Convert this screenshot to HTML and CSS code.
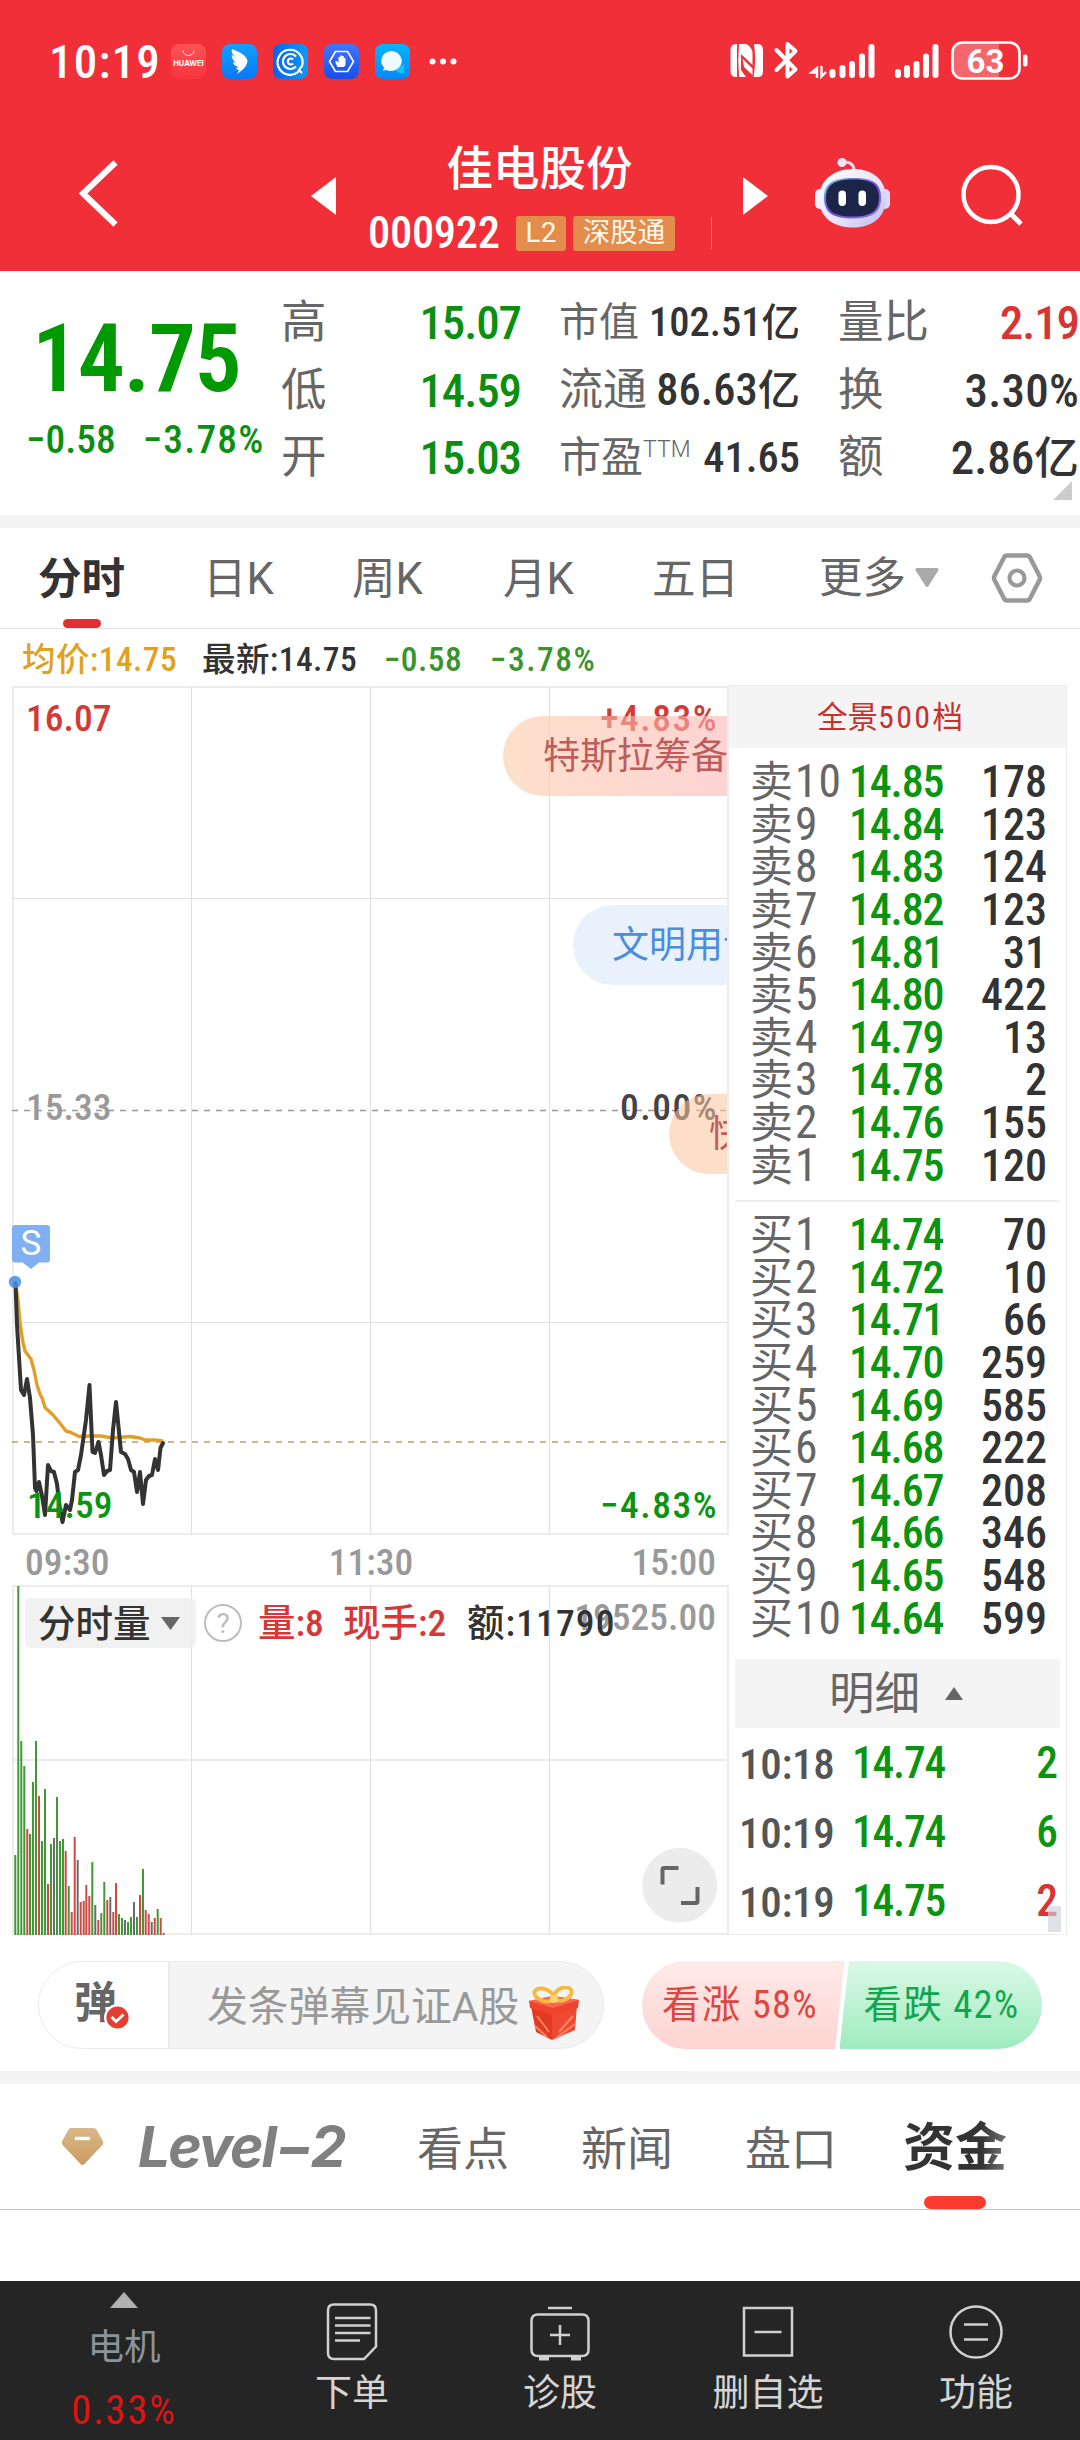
FILE: index.html
```
<!DOCTYPE html>
<html lang="zh-CN">
<head>
<meta charset="utf-8">
<title>佳电股份 000922</title>
<link rel="stylesheet" href="styles.css">
</head>
<body>
<header class="top">
  <div class="status">
    <span class="clock">10:19</span>
    <svg class="apps" width="290" height="36" viewBox="171 44 290 36">
      <defs>
        <linearGradient id="hw" x2="0" y2="1"><stop stop-color="#ff5257"/><stop offset="1" stop-color="#f8343c"/></linearGradient>
        <linearGradient id="bl" x2="0" y2="1"><stop stop-color="#13a0ff"/><stop offset="1" stop-color="#0878f8"/></linearGradient>
        <linearGradient id="qc"><stop stop-color="#0a62ee"/><stop offset="1" stop-color="#0c9af8"/></linearGradient>
        <linearGradient id="hd" x2="0" y2="1"><stop stop-color="#4277f8"/><stop offset="1" stop-color="#1450ea"/></linearGradient>
        <linearGradient id="ch" x2="0" y2="1"><stop stop-color="#06b4ff"/><stop offset="1" stop-color="#0787f8"/></linearGradient>
      </defs>
      <rect x="171" y="44" width="35" height="35" rx="8" fill="url(#hw)"/>
      <path d="M183 50.500a5.500 5 0 0 0 11 0" fill="none" stroke="#fff" stroke-width="1"/>
      <text x="188.500" y="66" class="hw">HUAWEI</text>
      <rect x="222" y="44" width="35" height="35" rx="8" fill="url(#bl)"/>
      <path d="M232 49C240 52 247 56 247.500 61C247 65 245 68 241 71L237 74L239 70L236 69L238 67C235 66 233 64 233 62L236 63C233 60 231 57 232 55L235 57C232 54 231 51 232 49Z" fill="#fff"/>
      <rect x="273" y="44" width="35" height="35" rx="8" fill="url(#qc)"/>
      <g fill="none" stroke="#fff" stroke-width="2.200"><path d="M299 71A12.500 12.500 0 1 1 302 66L299 70L302 73"/><path d="M296 56.500A7.500 7.500 0 1 0 296 66.500"/><path d="M293 59.500A3 3 0 1 0 293 63.500"/></g>
      <rect x="324" y="44" width="35" height="35" rx="8" fill="url(#hd)"/>
      <path d="M335.500 51.500H347.500L353.500 61.500L347.500 71.500H335.500L329.500 61.500Z" fill="none" stroke="#fff" stroke-width="1.600" stroke-linejoin="round"/>
      <path d="M337.500 67L335 61.500L337 61L338.500 63V57H340.200V61V55.500H342V61V56H343.800V61.500V58H345.500V65L344 67Z" fill="#fff"/>
      <rect x="375" y="44" width="35" height="35" rx="8" fill="url(#ch)"/>
      <path d="M404 64C405 68 402 71 405 73C400 74 396 72 396 70Z" fill="#0cc8ff"/>
      <path d="M391 51A11 10 0 1 1 386 70L383 71L384 67.500A11 10 0 0 1 391 51Z" fill="#eefaff"/>
      <g fill="#fff"><circle cx="432.500" cy="61.500" r="3"/><circle cx="443" cy="61.500" r="3"/><circle cx="453.500" cy="61.500" r="3"/></g>
    </svg>
    <svg class="signals" width="300" height="40" viewBox="730 41 300 40">
      <path d="M736 44H737V77H736Q730.500 77 730.500 71V50Q730.500 44 736 44ZM739 44H746Q751 46 752.500 52V65L741 54V70L746 77H739Q737.500 60 739 44ZM754 44H758Q763 44 763 50V71Q763 77 758 77H753.500Q756.500 60 754 44ZM742.500 58.500L752.500 68.500V75L744 67Z" fill="#fff"/>
      <path d="M776.500 50L795.500 69.500L787.500 76.500V44L795.500 51L776.500 70" fill="none" stroke="#fff" stroke-width="4" stroke-linejoin="round" stroke-linecap="round"/>
      <path d="M817 78V68L811.500 72.500H817M821.500 66V76.500L826 72" fill="none" stroke="#fff" stroke-width="2.400"/>
      <g stroke="#fff" stroke-width="6" stroke-linecap="round"><path d="M832.500 72V75M842.500 68V75M852 64V75M862 56.500V75M871.500 47V75M898 72V75M907 68V75M916.500 64V75M926 56.500V75M935.500 47V75"/></g>
      <path d="M962 43.500H999V78H962A9.500 9.500 0 0 1 953 69V52.500A9.500 9.500 0 0 1 962 43.500Z" fill="#f6676d"/>
      <rect x="952.500" y="42.500" width="67" height="36" rx="10" fill="none" stroke="#fff" stroke-width="2.600"/>
      <rect x="1023" y="54.500" width="4.500" height="12" rx="2" fill="#fff"/>
      <text x="985.500" y="72.700" class="batt">63</text>
    </svg>
  </div>
  <div class="titlebar">
    <svg class="back" width="40" height="68" viewBox="79 160 40 68"><path d="M115.500 162.500L83 193.500L115.500 224.500" fill="none" stroke="#fff" stroke-width="6"/></svg>
    <svg class="prev" width="25" height="38" viewBox="0 0 25 38"><path d="M25 0V38L0 19Z" fill="#fff"/></svg>
    <div class="stock">
      <div class="name">佳电股份</div>
      <div class="codeline"><span class="code">000922</span><span class="tag l2">L2</span><span class="tag sgt">深股通</span><i class="vline"></i></div>
    </div>
    <svg class="next" width="25" height="38" viewBox="0 0 25 38"><path d="M0 0V38L25 19Z" fill="#fff"/></svg>
    <svg class="robot" width="76" height="72" viewBox="815 157 76 72">
      <defs><linearGradient id="rb" x2="1" y2="1"><stop stop-color="#fff"/><stop offset=".6" stop-color="#e6e2fa"/><stop offset="1" stop-color="#b9b8ee"/></linearGradient>
      <linearGradient id="sc" x2="1" y2="1"><stop stop-color="#5fc4e0"/><stop offset=".5" stop-color="#7049d8"/><stop offset="1" stop-color="#8d7ae8"/></linearGradient></defs>
      <path d="M842 163C849 161 854 164 854 170" fill="none" stroke="#e8dcf6" stroke-width="3"/><circle cx="842" cy="162.500" r="4.500" fill="#efe6fa"/>
      <rect x="815" y="189" width="10" height="20" rx="5" fill="#f3f1fd"/><rect x="880" y="189" width="10" height="20" rx="5" fill="#dcdaf8"/>
      <path d="M853 169C875 169 886 182 886 198C886 217 872 227.500 853 227.500C833 227.500 819 217 819 198C819 182 832 169 853 169Z" fill="url(#rb)"/>
      <path d="M853 178C874 178 881 184 881 198C881 212 873 218.500 853 218.500C832 218.500 824 212 824 198C824 184 832 178 853 178Z" fill="url(#sc)"/>
      <path d="M853 179.500C872 179.500 879 185 879 198C879 211 871 216.500 853 216.500C834 216.500 826 211 826 198C826 185 834 179.500 853 179.500Z" fill="#1c2448"/>
      <rect x="838.500" y="190.500" width="7.500" height="15.500" rx="3.700" fill="#fff"/><rect x="858.500" y="190.500" width="7.500" height="15.500" rx="3.700" fill="#fff"/>
    </svg>
    <svg class="search" width="66" height="66" viewBox="960 163 66 66"><circle cx="991" cy="194.500" r="27.500" fill="none" stroke="#fff" stroke-width="4.500"/><path d="M1010.500 213.500L1021 224" stroke="#fff" stroke-width="5"/></svg>
  </div>
</header>

<section class="quote">
  <div class="price">
    <div class="last">14.75</div>
    <div class="chg"><span>−0.58</span><span class="pc">−3.78%</span></div>
  </div>
  <dl class="c1">
    <div><dt>高</dt><dd class="g">15.07</dd></div>
    <div><dt>低</dt><dd class="g">14.59</dd></div>
    <div><dt>开</dt><dd class="g">15.03</dd></div>
  </dl>
  <dl class="c2">
    <div class="s40"><dt>市值</dt><dd>102.51<b>亿</b></dd></div>
    <div class="s44"><dt>流通</dt><dd>86.63<b>亿</b></dd></div>
    <div class="s42"><dt>市盈<sup>TTM</sup></dt><dd>41.65</dd></div>
  </dl>
  <dl class="c3">
    <div><dt>量比</dt><dd class="r">2.19</dd></div>
    <div><dt>换</dt><dd class="pct">3.30%</dd></div>
    <div><dt>额</dt><dd>2.86<b>亿</b></dd></div>
  </dl>
  <i class="corner"></i>
</section>

<nav class="periods">
  <span class="on">分时</span><span>日K</span><span>周K</span><span>月K</span><span>五日</span>
  <span class="more">更多<svg width="24" height="20" viewBox="0 0 24 20"><path d="M2 0H22Q24.500 .5 23 3L13.500 18Q12 20 10.500 18L1 3Q-.5 .5 2 0Z" fill="#aaa"/></svg></span>
  <svg class="gear" width="52" height="50" viewBox="0 0 52 50"><path d="M16 2.500H36Q38 2.500 39 4.500L48.500 23Q49.500 25 48.500 27L39 45.500Q38 47.500 36 47.500H16Q14 47.500 13 45.500L3.500 27Q2.500 25 3.500 23L13 4.500Q14 2.500 16 2.500Z" fill="none" stroke="#999" stroke-width="4.500"/><circle cx="26" cy="25" r="7.500" fill="none" stroke="#999" stroke-width="4.200"/></svg>
</nav>

<div class="legend"><span class="avg">均价:14.75</span><span class="new">最新:14.75</span><span class="lg">−0.58</span><span class="lg pc">−3.78%</span></div>

<main class="board">
  <svg class="chart" width="729" height="1250" viewBox="0 685 729 1250">
    <defs>
      <linearGradient id="p1" gradientUnits="userSpaceOnUse" x1="503" x2="729" y1="0" y2="0"><stop stop-color="#fbc9a4"/><stop offset="1" stop-color="#fcb3b3"/></linearGradient>
    </defs>
    <g stroke="#ececec" stroke-width="2" fill="none">
      <path d="M13 687H728V1534H13ZM13 1586H728V1934H13ZM13 1760H728"/>
    </g>
    <path d="M12 898.500H728M12 1322.500H728M191.500 687V1534M370.500 687V1534M549.500 687V1534M191.500 1587V1934M370.500 1587V1934M549.500 1587V1934" stroke="#e0e0e0" fill="none"/>
    <path d="M12 1110.500H728" stroke="#999" stroke-width="1.500" stroke-dasharray="6 6"/>
    <path d="M12 1442H728" stroke="#b5a06a" stroke-width="1.500" stroke-dasharray="6 6"/>
    <polyline fill="none" stroke="#dfa02a" stroke-width="3.400" stroke-linejoin="round" points="15.500,1283 18,1300 20,1322 22.500,1340 25,1351 31,1359 34,1370 37,1385 40,1394 42.500,1399 45,1407.500 53,1415 59,1422 66,1431 71,1432.500 79,1436.500 90,1436 101,1436 112,1438 130,1436.500 140,1438 145,1440 155,1440 163,1441"/>
    <polyline fill="none" stroke="#333" stroke-width="4" stroke-linejoin="round" stroke-linecap="round" points="15.500,1283 17,1325 21,1390 24,1395 27,1379 30,1398 33,1435 35,1488 36.500,1491 39,1482 42,1496 45,1515 48,1465 51,1471 54,1472 57,1484 60,1510 62.500,1522 66,1505 70,1510 72,1500 75,1472 78,1470 81,1455 86,1420 89.500,1385 92.500,1452 95,1453 98.500,1442 101,1455 104,1475 107,1471 110,1470 113,1430 116,1402 121,1452 125,1454 128,1459 131,1470 134,1472 137,1492 140,1472 143,1504 146,1480 149,1476 152,1475 155,1459 158,1470 160.500,1448 163,1443"/>
    <circle cx="15" cy="1282" r="6.200" fill="#4a8fe3" opacity=".85"/>
    <path d="M15 1225H47Q50 1225 50 1228V1259.500Q50 1262.500 47 1262.500H39L31 1269L22.500 1262.500H15Q12 1262.500 12 1259.500V1228Q12 1225 15 1225Z" fill="#80b0f2"/>
    <text x="31" y="1255" class="mark">S</text>
    <g class="ax">
      <text x="26" y="730.500" class="tr">16.07</text><text x="718" y="730.500" class="tr end pc">+4.83%</text>
      <text x="26" y="1119.500" class="tg">15.33</text><text x="718" y="1119.500" class="td end pc">0.00%</text>
      <text x="27" y="1518" class="gr">14.59</text><text x="718" y="1518" class="gr end pc">−4.83%</text>
      <text x="25" y="1575" class="tg">09:30</text><text x="371" y="1575" class="tg mid">11:30</text><text x="716" y="1575" class="tg end">15:00</text>
      <text x="716" y="1630" class="tg end">19525.00</text>
    </g>
    <g opacity=".58"><path d="M729 716H543A40 40 0 0 0 543 796H729Z" fill="url(#p1)"/></g>
    <text x="543" y="769" class="dm dr">特斯拉筹备</text>
    <path d="M729 905H613A40 40 0 0 0 613 985H729Z" fill="#e9f1fd"/>
    <text x="612" y="958" class="dm db">文明用语</text>
    <path d="M729 1094H709A40 40 0 0 0 709 1174H729Z" fill="#fbc39a" opacity=".55"/>
    <text x="709" y="1147" class="dm dr">快涨</text>
    <path d="M728 687V1534" stroke="#ececec" stroke-width="2"/>
    <g fill="none" stroke-width="2">
      <path stroke="#3f9a35" d="M15.300 1935V1855M18.300 1935V1586M21.300 1935V1741M24.300 1935V1766M30 1935V1834M33 1935V1782M36 1935V1741M42 1935V1841M45 1935V1789M51 1935V1844M57 1935V1797M60 1935V1841M63 1935V1839M68.700 1935V1886M92.300 1935V1862M101.300 1935V1913M104.300 1935V1882M119 1935V1914M122 1935V1918M128 1935V1922M131 1935V1917M137 1935V1917M143 1935V1869M157.700 1935V1909"/>
      <path stroke="#cf4a45" d="M27.300 1935V1829M39 1935V1796M48 1935V1884M65.700 1935V1851M71.700 1935V1912M74.700 1935V1837M80.700 1935V1902M83.700 1935V1901M86.300 1935V1885M89.300 1935V1896M98.300 1935V1920M107.300 1935V1900M113.300 1935V1912M116 1935V1883M140 1935V1895M145.700 1935V1910M148.700 1935V1914M154.700 1935V1918M160.700 1935V1918M163.700 1935V1933"/>
      <path stroke="#6b6b6b" d="M54 1935V1838M77.700 1935V1860M95.300 1935V1905M110.300 1935V1897M125 1935V1920M134 1935V1902M151.700 1935V1922"/>
    </g>
    <rect x="25" y="1598" width="171" height="50" rx="6" fill="#eee" fill-opacity=".85"/>
    <text x="38" y="1637" class="vt td2">分时量</text>
    <path d="M161 1617H180L170.500 1630Z" fill="#666"/>
    <circle cx="223" cy="1623" r="18" fill="none" stroke="#bdbdbd" stroke-width="2"/><text x="223" y="1633" class="qm">?</text>
    <text x="258" y="1636" class="vt tr">量:8</text><text x="343" y="1636" class="vt tr">现手:2</text><text x="467" y="1636" class="vt td2 wide">额:11790</text>
    <circle cx="679.700" cy="1885.300" r="37.500" fill="#ececec"/>
    <path d="M678.500 1868H664Q662.500 1868 662.500 1870V1884.500M681 1903H696Q697.500 1903 697.500 1901V1887" fill="none" stroke="#666" stroke-width="4"/>
  </svg>
  <aside class="book">
    <div class="full">全景<span>500</span>档</div>
    <ul class="asks">
      <li><i>卖<u>10</u></i><b>14.85</b><em>178</em></li>
      <li><i>卖<u>9</u></i><b>14.84</b><em>123</em></li>
      <li><i>卖<u>8</u></i><b>14.83</b><em>124</em></li>
      <li><i>卖<u>7</u></i><b>14.82</b><em>123</em></li>
      <li><i>卖<u>6</u></i><b>14.81</b><em>31</em></li>
      <li><i>卖<u>5</u></i><b>14.80</b><em>422</em></li>
      <li><i>卖<u>4</u></i><b>14.79</b><em>13</em></li>
      <li><i>卖<u>3</u></i><b>14.78</b><em>2</em></li>
      <li><i>卖<u>2</u></i><b>14.76</b><em>155</em></li>
      <li><i>卖<u>1</u></i><b>14.75</b><em>120</em></li>
    </ul>
    <ul class="bids">
      <li><i>买<u>1</u></i><b>14.74</b><em>70</em></li>
      <li><i>买<u>2</u></i><b>14.72</b><em>10</em></li>
      <li><i>买<u>3</u></i><b>14.71</b><em>66</em></li>
      <li><i>买<u>4</u></i><b>14.70</b><em>259</em></li>
      <li><i>买<u>5</u></i><b>14.69</b><em>585</em></li>
      <li><i>买<u>6</u></i><b>14.68</b><em>222</em></li>
      <li><i>买<u>7</u></i><b>14.67</b><em>208</em></li>
      <li><i>买<u>8</u></i><b>14.66</b><em>346</em></li>
      <li><i>买<u>9</u></i><b>14.65</b><em>548</em></li>
      <li><i>买<u>10</u></i><b>14.64</b><em>599</em></li>
    </ul>
    <div class="detail">明细<svg width="18" height="13" viewBox="0 0 18 13"><path d="M9 0L18 13H0Z" fill="#666"/></svg></div>
    <ul class="ticks">
      <li><i>10:18</i><b>14.74</b><em>2</em></li>
      <li><i>10:19</i><b>14.74</b><em>6</em></li>
      <li><i>10:19</i><b>14.75</b><em class="r">2</em></li>
    </ul>
    <span class="thumb"></span>
  </aside>
</main>

<section class="barrage">
  <div class="input">
    <div class="toggle"><span>弹</span><svg width="27" height="27" viewBox="0 0 27 27"><circle cx="13.500" cy="13.500" r="12.300" fill="#e63d33" stroke="#fff" stroke-width="2.400"/><path d="M7.500 13L12 17.500L19.500 10.500" fill="none" stroke="#fff" stroke-width="3"/></svg></div>
    <div class="ph">发条弹幕见证A股</div>
    <svg class="gift" width="50" height="54" viewBox="0 0 50 54">
      <path d="M2 20L23 28V54L7 46Z" fill="#e43a24"/><path d="M23 28L48 19L46 44L23 54Z" fill="#ee4a33"/>
      <path d="M0 15L24 10L50 14L49 22L24 29L1 22Z" fill="#f0432e"/><path d="M0 15L24 10L50 14L24 22Z" fill="#fa6450"/>
      <path d="M30 46L44 30M27 52L46 38M8 30L20 46M6 40L18 51" stroke="#ff8462" stroke-width="2"/>
      <g fill="none" stroke="#f6ba42" stroke-width="4"><ellipse cx="15" cy="9" rx="10" ry="6" transform="rotate(20 15 9)"/><ellipse cx="34" cy="8" rx="9" ry="6" transform="rotate(-25 34 8)"/></g><circle cx="25" cy="13" r="4" fill="#ffd66b"/>
    </svg>
  </div>
  <div class="vote"><span class="up">看涨 58%</span><span class="down">看跌 42%</span></div>
</section>

<nav class="tabs">
  <svg class="gem" width="44" height="40" viewBox="0 0 44 40"><defs><linearGradient id="gm" x2="0" y2="1"><stop stop-color="#d9b88a"/><stop offset="1" stop-color="#cb9b60"/></linearGradient></defs><path d="M10 0H34Q36 0 37 2L43.500 14Q44.500 16 43 18L24 38Q22 40 20 38L1 18Q-.5 16 .5 14L7 2Q8 0 10 0Z" fill="url(#gm)"/><path d="M14 11H30" stroke="#fff" stroke-width="3.500"/></svg>
  <span class="lv">Level−2</span><span class="t1">看点</span><span class="t2">新闻</span><span class="t3">盘口</span><span class="t4">资金</span>
</nav>

<footer class="bar">
  <div class="index"><svg width="28" height="16" viewBox="0 0 28 16"><path d="M14 0L28 16H0Z" fill="#b0b0b0"/></svg><span>电机</span><strong>0.33%</strong></div>
  <div class="item"><svg width="60" height="60" viewBox="0 0 60 60"><path d="M12 3.500H48Q54 3.500 54 9.500V45.500L42 58H12Q6 58 6 52V9.500Q6 3.500 12 3.500ZM13 17H48.500M13 24.500H48.500M13 32H48.500M13 39.500H38"/></svg><span>下单</span></div>
  <div class="item"><svg width="60" height="60" viewBox="0 0 60 60"><path d="M18 7H42M8 13.500H52Q58.500 13.500 58.500 20V49Q58.500 55 52 55H8Q1.500 55 1.500 49V20Q1.500 13.500 8 13.500ZM30 24V44M20 34H40"/><path d="M9 57.500H19M41 57.500H51" stroke-width="4"/></svg><span>诊股</span></div>
  <div class="item"><svg width="60" height="60" viewBox="0 0 60 60"><path d="M6 7H54V54.500H6ZM16.500 31H43.500"/></svg><span>删自选</span></div>
  <div class="item"><svg width="60" height="60" viewBox="0 0 60 60"><circle cx="30" cy="31" r="25.500"/><path d="M18 23.500H42M18 38.500H42"/></svg><span>功能</span></div>
</footer>
</body>
</html>
```
FILE: styles.css
```
* { box-sizing: border-box; margin: 0; padding: 0; }
body {
  width: 1080px;
  height: 2440px;
  overflow: hidden;
  background: #fff;
  color: #333;
  font-family: Roboto, "Noto Sans CJK SC", sans-serif;
  font-stretch: 75%;
  font-weight: 400;
  display: flex;
  flex-direction: column;
}
svg { display: block; flex: none; }
ul { list-style: none; }
i, em { font-style: normal; }
u { text-decoration: none; }

/* status and title */
.top { height: 271px; background: #f12f38; color: #fff; flex: none; }
.status { height: 123px; padding: 41px 52px 0 49px; display: flex; align-items: flex-start; }
.clock { width: 122px; font-size: 47px; line-height: 42px; font-weight: 500; letter-spacing: 1.200px; }
.apps { margin-top: 3px; }
.signals { margin-left: auto; margin-right: -2px; }
.hw { font: 700 7.500px Inter, sans-serif; fill: #fff; text-anchor: middle; }
.batt { font: 700 33px Roboto, sans-serif; font-stretch: 90%; fill: #fff; text-anchor: middle; }
.titlebar { display: flex; align-items: flex-start; padding-left: 79px; height: 148px; }
.back { margin-top: 37px; }
.prev { margin: 54px 0 0 192px; }
.next { margin-top: 54px; }
.stock { width: 407px; flex: none; }
.name { margin-top: 19px; text-align: center; font-size: 46.500px; line-height: 54px; font-weight: 500; }
.codeline { display: flex; align-items: center; height: 36px; margin-top: 19px; padding-left: 32px; }
.code { font-size: 44.500px; line-height: 38px; font-weight: 500; letter-spacing: -.3px; width: 148px; }
.tag { height: 35px; line-height: 34px; border-radius: 3px; background: #e38c4b; font-size: 27.500px; text-align: center; color: #fff8ea; }
.l2 { width: 50px; font-stretch: 100%; font-size: 28px; }
.sgt { width: 102px; margin-left: 7px; }
.vline { width: 1px; height: 32px; margin-left: 36px; background: #e38c4b; }
.robot { margin: 34px 0 0 47px; }
.search { margin: 40px 0 0 69px; }

/* quote */
.quote { position: relative; height: 257px; flex: none; border-bottom: 13px solid #f4f4f4; display: flex; font-weight: 500; }
.price { width: 281px; color: #090; flex: none; }
.last { margin-top: 42px; padding-left: 32px; font-size: 94px; line-height: 92px; font-weight: 600; letter-spacing: -1.500px; }
.chg { display: flex; gap: 27px; padding-left: 26px; margin-top: 14px; font-size: 39.500px; line-height: 42px; white-space: nowrap; color: #0b8f10; }
.chg .pc { letter-spacing: 1.200px; }
dl { display: flex; flex-direction: column; padding-top: 18px; }
dl div { display: flex; justify-content: space-between; height: 67.500px; line-height: 67.500px; font-size: 47px; white-space: nowrap; }
dt { color: #666; font-weight: 400; font-size: 45.500px; }
dd b { font-weight: 500; font-size: .95em; }
.c1 { width: 239px; }
.c1 dd, .c3 .r { letter-spacing: -1.100px; }
.c1 dd { margin-right: -1px; }
.c3 .pct { letter-spacing: .2px; }
.c2 { width: 241px; margin-left: 39px; }
.c3 { width: 241px; margin-left: 38px; }
.c2 .s40 { font-size: 40.500px; } .s40 dt { font-size: 40px; }
.c2 .s44 { font-size: 44.500px; } .s44 dt { font-size: 44px; }
.c2 .s42 { font-size: 42.500px; } .s42 dt { font-size: 42px; }
sup { font-size: 23px; line-height: 0; vertical-align: 15px; font-stretch: 100%; font-weight: 300; }
.g { color: #0b8f10; } .r { color: #d83434; }
.corner { position: absolute; right: 8px; bottom: 15px; width: 19px; height: 19px; background: #ccc; clip-path: polygon(100% 0, 100% 100%, 0 100%); }

/* period tabs */
.periods { height: 101px; flex: none; border-bottom: 1px solid #e2e2e2; display: flex; font-size: 43.500px; line-height: 103px; color: #666; font-stretch: 100%; }
.periods span { white-space: nowrap; }
.periods span:nth-child(1) { margin-left: 38px; width: 165px; }
.periods span:nth-child(2) { width: 149px; }
.periods span:nth-child(3) { width: 151px; }
.periods span:nth-child(4) { width: 149px; }
.periods span:nth-child(5) { width: 167px; }
.periods .on { font-weight: 700; color: #333; position: relative; }
.periods .on::after { content: ""; position: absolute; left: 25px; bottom: 0; width: 38px; height: 9px; border-radius: 5px; background: #e23030; }
.more { display: flex; align-items: center; width: 172px; gap: 9px; }
.gear { margin-top: 25px; }

.legend { height: 56px; flex: none; padding-left: 22px; display: flex; font-size: 33.500px; line-height: 62px; white-space: nowrap; }
.legend span { color: #3a932c; font-weight: 500; letter-spacing: .4px; }
.legend .avg { color: #e2a01f; width: 180px; }
.legend .new { color: #333; width: 182px; }
.legend .lg:nth-child(3) { width: 106px; }
.legend .pc { letter-spacing: 1.500px; }

/* chart */
.board { display: flex; height: 1250px; flex: none; }
.chart text { font-family: Roboto, "Noto Sans CJK SC", sans-serif; font-stretch: 75%; }
.chart .ax text { font-size: 37.500px; font-weight: 500; }
.chart .ax .pc { letter-spacing: 1.500px; }
.chart .end { text-anchor: end; } .chart .mid { text-anchor: middle; }
.chart .tr { fill: #d33a37; } .chart .tg { fill: #999; } .chart .td { fill: #444; } .chart .gr { fill: #0b9410; }
.chart .td2 { fill: #333; }
.chart .mark { font-size: 35px; font-stretch: 100%; fill: #fff; text-anchor: middle; }
.chart .dm { font-size: 37px; } .chart .dr { fill: #bf5c5c; } .chart .db { fill: #4a8ddc; }
.chart .vt { font-size: 37.500px; font-weight: 500; }
.chart .wide { letter-spacing: 1.100px; }
.chart .qm { font-size: 28px; fill: #bdbdbd; text-anchor: middle; font-stretch: 100%; }

/* order book */
.book { position: relative; width: 338px; border: 1px solid #ebebeb; border-width: 1px 1px 1px 0; font-weight: 500; }
.full { height: 62px; background: #f4f4f4; text-align: center; font-size: 30.500px; line-height: 63px; color: #c9312f; font-weight: 400; padding-right: 15px; }
.full span { font-size: 32px; letter-spacing: 2.300px; }
.asks { margin: 13px 6px 0; height: 441px; border-bottom: 2px solid #f0f0f0; }
.bids { margin: 12px 6px 0; height: 445px; }
.asks li, .bids li { display: flex; height: 42.650px; line-height: 42.650px; font-size: 44px; padding: 0 13px 0 15px; }
.book i { width: 99px; color: #666; font-weight: 400; font-size: 43px; white-space: nowrap; }
.book u { font-size: 45.500px; margin-left: 2px; letter-spacing: 1px; }
.book b { font-weight: 500; color: #0b9410; letter-spacing: -1.200px; }
.book em { margin-left: auto; color: #333; }
.detail { margin: 0 6px; height: 69px; background: #f4f4f4; color: #666; font-size: 45.500px; line-height: 72px; display: flex; align-items: center; padding: 3px 0 0 94px; gap: 25px; font-weight: 400; }
.detail svg { margin-top: -3px; }
.ticks { margin: 0 6px; }
.ticks li { display: flex; height: 68.800px; line-height: 72px; font-size: 43.500px; padding: 0 2px 0 4px; }
.ticks i { width: 113px; font-size: 43px; color: #555; font-weight: 500; letter-spacing: -.3px; }
.ticks em { color: #0b9410; }
.ticks em.r { color: #d83434; }
.thumb { position: absolute; right: 5px; bottom: 2px; width: 13px; height: 26px; background: rgba(205, 210, 216, .65); }

/* barrage */
.barrage { height: 149px; flex: none; border-bottom: 13px solid #f4f4f4; padding: 26px 0 0 38px; display: flex; }
.input { position: relative; width: 566px; height: 88px; border-radius: 44px; border: 1px solid #ebebeb; background: #f4f4f4; overflow: hidden; display: flex; }
.toggle { position: relative; width: 131px; background: #fff; border-right: 2px solid #ebebeb; font-size: 43px; font-weight: 700; color: #666; line-height: 82px; padding-left: 35px; }
.toggle svg { position: absolute; left: 65px; top: 42px; }
.ph { padding-left: 37px; font-size: 40.800px; line-height: 90px; color: #999; font-stretch: 100%; white-space: nowrap; }
.gift { margin: 24px 0 0 10px; }
.vote { display: flex; margin-left: 38px; width: 400px; height: 88px; border-radius: 44px; overflow: hidden; font-size: 38.500px; line-height: 88px; white-space: nowrap; letter-spacing: 1.300px; }
.up { width: 202.500px; padding-left: 20px; color: #dc4740; background: linear-gradient(#feeae8, #fdd4d1); clip-path: polygon(0 0, 100% 0, 193px 100%, 0 100%); }
.down { flex: 1; margin-left: -5px; padding-left: 24px; color: #12a64e; background: linear-gradient(#dbf9e6, #9febbf); clip-path: polygon(9.500px 0, 100% 0, 100% 100%, 0 100%); }

/* content tabs */
.tabs { height: 126px; flex: none; border-bottom: 1px solid #c4c4c4; display: flex; font-size: 46px; line-height: 130px; color: #666; white-space: nowrap; }
.gem { margin: 44px 0 0 61px; width: 43px; height: 38px; }
.lv { margin-left: 34px; width: 279px; font: italic 700 57px/126px Inter, sans-serif; letter-spacing: -2px; color: #808080; }
.t1 { width: 164px; } .t2 { width: 164px; } .t3 { width: 158px; }
.t4 { position: relative; font-size: 52px; font-weight: 700; background: linear-gradient(90deg, #333 75%, #777); -webkit-background-clip: text; background-clip: text; color: transparent; }
.t4::after { content: ""; position: absolute; left: 21px; bottom: 0; width: 62px; height: 13px; border-radius: 7px; background: #fb3a30; }

/* bottom bar */
.bar { margin-top: auto; height: 159px; flex: none; background: #252525; display: flex; color: #d4d4d4; }
.index { width: 248px; display: flex; flex-direction: column; align-items: center; padding-top: 11px; }
.index span { margin-top: 16px; font-size: 36.500px; line-height: 48px; color: #8b939b; }
.index strong { margin-top: 13px; font-size: 40.500px; line-height: 50px; font-weight: 400; color: #e01212; letter-spacing: 1.800px; }
.item { width: 208px; display: flex; flex-direction: column; align-items: center; padding-top: 20px; }
.item svg { fill: none; stroke: #d0d0d0; stroke-width: 2.500; }
.item span { margin-top: 7px; font-size: 37px; line-height: 52px; }
```
